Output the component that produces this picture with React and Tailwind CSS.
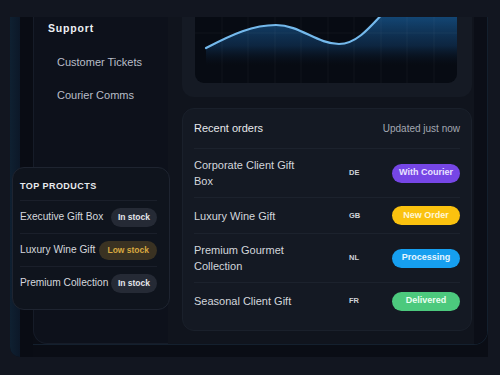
import React from 'react'

const orders = [
  { name: ['Corporate Client Gift', 'Box'], cc: 'DE', status: 'With Courier', pill: 'bg-[#7646e6] text-[#e9e3ff]' },
  { name: ['Luxury Wine Gift'], cc: 'GB', status: 'New Order', pill: 'bg-[#fbc20f] text-[#fff6d6]' },
  { name: ['Premium Gourmet', 'Collection'], cc: 'NL', status: 'Processing', pill: 'bg-[#169ff0] text-[#e6f6ff]' },
  { name: ['Seasonal Client Gift'], cc: 'FR', status: 'Delivered', pill: 'bg-[#4cc97d] text-[#eafff1]' },
]

const products = [
  { name: 'Executive Gift Box', stock: 'In stock', low: false },
  { name: 'Luxury Wine Gift', stock: 'Low stock', low: true },
  { name: 'Premium Collection', stock: 'In stock', low: false },
]

function Chart() {
  const grid = [27, 53, 80, 106, 133, 159, 186, 212, 239]
  return (
    <svg width="262" height="66" viewBox="0 0 262 66" className="block">
      <defs>
        <linearGradient id="area" x1="0" y1="0" x2="0" y2="48" gradientUnits="userSpaceOnUse">
          <stop offset="0" stopColor="#134674" stopOpacity="1" />
          <stop offset="0.6" stopColor="#0f2e4f" stopOpacity="0.75" />
          <stop offset="1" stopColor="#0a1626" stopOpacity="0" />
        </linearGradient>
      </defs>
      <path
        d="M11 31 C 38 17, 58 8, 81 8 C 105 8, 122 27, 144 27 C 160 27, 172 14, 190 -6 L 262 -6 L 262 48 L 11 48 Z"
        fill="url(#area)"
      />
      {grid.map(x => (
        <line key={x} x1={x} y1="0" x2={x} y2="66" stroke="#ffffff" strokeOpacity="0.04" />
      ))}
      <line x1="0" y1="16" x2="262" y2="16" stroke="#ffffff" strokeOpacity="0.04" />
      <path
        d="M11 31 C 38 17, 58 8, 81 8 C 105 8, 122 27, 144 27 C 160 27, 172 14, 190 -6"
        fill="none"
        stroke="#74b9ec"
        strokeWidth="2.2"
        strokeLinecap="round"
      />
    </svg>
  )
}

export default function App() {
  return (
    <div className="relative w-[500px] h-[375px] overflow-hidden bg-[#121620] pt-[17px] pl-[10px] font-['Liberation_Sans',Arial,sans-serif]">
      {/* frame */}
      <div className="flex w-[478px] h-[340px] bg-[#0a0d15] rounded-bl-[10px]">
        <div className="w-[10px] h-full bg-gradient-to-r from-[#0f2031] to-[#0c1828] rounded-bl-[10px]" />
        <div className="w-[13px] h-full bg-[#090c14]" />

        {/* app window */}
        <div className="flex flex-1 h-[328px] border-r border-b border-[#14202e] rounded-br-[14px] overflow-hidden">
          {/* sidebar */}
          <div className="w-[135px] h-full bg-[#0d111b] border-l border-b border-[#161c28] rounded-bl-[14px] pt-[3px]">
            <div className="pl-[14px] leading-[16px] text-[10.5px] font-bold tracking-[0.08em] text-[#eef0f4]">Support</div>
            <div className="pl-[23px] mt-[18px] leading-[16px] text-[11px] text-[#b9bec8]">Customer Tickets</div>
            <div className="pl-[23px] mt-[17px] leading-[16px] text-[11px] text-[#b9bec8]">Courier Comms</div>
          </div>

          {/* main */}
          <div className="flex flex-1 h-full bg-[#0d1119]">
            <div className="flex-1 pl-[14px] pr-[1px] bg-[#10141d]">
              {/* chart card */}
              <div className="w-[290px] h-[80px] bg-[#151a24] rounded-b-[12px] px-[13px]">
                <div className="w-[262px] h-[66px] bg-[#070b13] rounded-b-[9px] overflow-hidden">
                  <Chart />
                </div>
              </div>

              {/* orders card */}
              <div className="mt-[11px] w-[290px] h-[223px] bg-[#141923] border border-[#1a202b] rounded-[12px] px-[11px]">
                <div className="flex items-center justify-between h-[40px] border-b border-[#1c222d]">
                  <span className="text-[11px] text-[#e6e8ec]">Recent orders</span>
                  <span className="text-[10px] text-[#a3a8b2]">Updated just now</span>
                </div>
                {orders.map((o, i) => (
                  <div
                    key={o.cc}
                    className={`flex items-center ${o.name.length > 1 ? 'h-[49px]' : 'h-[36px]'} ${i < orders.length - 1 ? 'border-b border-[#1c222d]' : ''}`}
                  >
                    <div className="w-[150px] text-[11px] leading-[16px] text-[#d3d6dc]">
                      {o.name.map(l => (
                        <div key={l}>{l}</div>
                      ))}
                    </div>
                    <div className="w-[48px] pl-[5px] text-[7.5px] font-bold text-[#d0d3d9]">{o.cc}</div>
                    <div className={`ml-auto w-[68px] h-[19px] rounded-full flex items-center justify-center text-[9px] font-bold ${o.pill}`}>
                      {o.status}
                    </div>
                  </div>
                ))}
              </div>
            </div>
            <div className="w-[13px] h-full bg-[#0b0e17]" />
          </div>
        </div>
      </div>

      {/* floating top products */}
      <div className="absolute left-[12px] top-[167px] w-[158px] h-[143px] bg-[#0f141d] border border-[#1e2430] rounded-[12px] pl-[7px] pr-[12px] pt-[11px]">
        <div className="text-[9px] leading-[14px] font-bold tracking-[0.05em] text-[#e8eaee] h-[14px]">TOP PRODUCTS</div>
        <div className="mt-[7px]">
          {products.map(p => (
            <div key={p.name} className="flex items-center justify-between h-[33px] border-t border-[#1a1f2a]">
              <span className="whitespace-nowrap text-[10.2px] text-[#d5d8de]">{p.name}</span>
              <span
                className={`shrink-0 whitespace-nowrap h-[19px] rounded-full flex items-center text-[8.5px] font-bold ${
                  p.low ? 'px-[8px] bg-[#3a3222] text-[#d8a940]' : 'px-[7px] bg-[#252a35] text-[#e4e6ea]'
                }`}
              >
                {p.stock}
              </span>
            </div>
          ))}
        </div>
      </div>
    </div>
  )
}
